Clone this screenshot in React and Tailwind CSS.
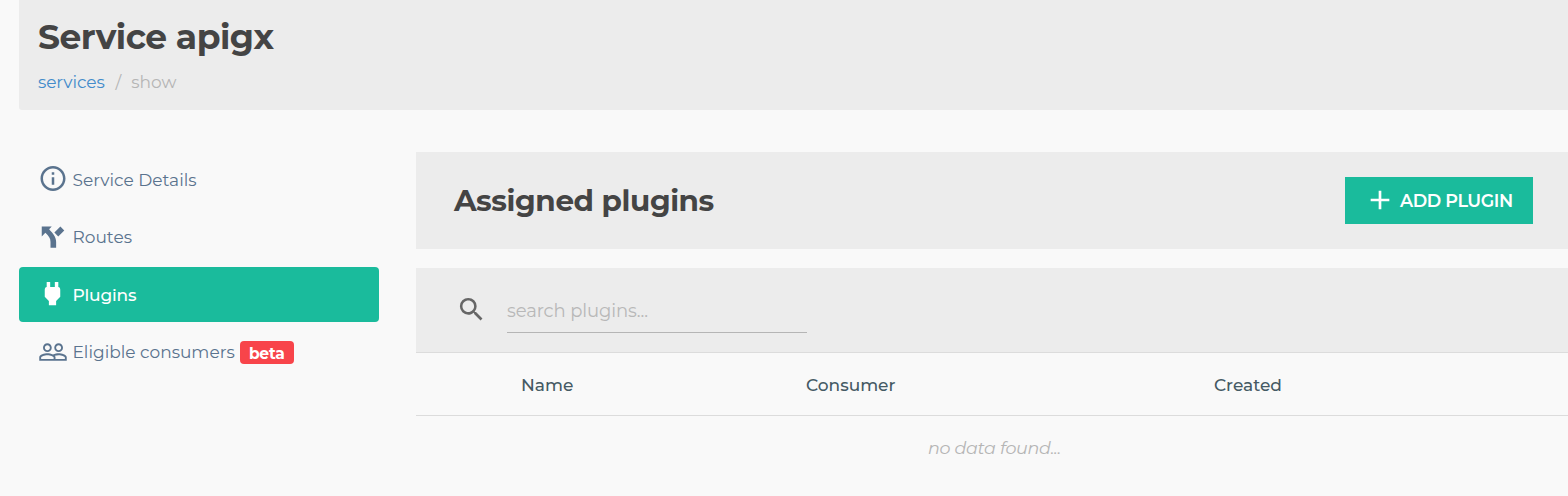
import { MdInfoOutline, MdPeopleOutline, MdSearch, MdAdd } from "react-icons/md";

function ForkIcon() {
  return (
    <svg viewBox="0 0 24 24" className="size-[30px]" fill="currentColor">
      <path d="M3 3.5V11.5L5.9 8.6C8.6 11.3 10 12.8 10 16V20.5H14.5V16C14.5 11.5 11.6 8.9 8.9 5.8L11 3.5ZM17.9 3.6L13.1 8.4L16.2 11.5L21 6.7Z" />
    </svg>
  );
}

function PlugIcon() {
  return (
    <svg viewBox="0 0 24 24" className="mb-[2px] size-[31px]" fill="currentColor">
      <path d="M16.5 7V3H13.8V7H10.2V3H7.5V7C6.6 7 6 8 6 9V14.5L9.2 17.8V21H14.8V17.8L18 14.5V9C18 8 17.4 7 16.5 7Z" />
    </svg>
  );
}

function NavItem({ icon, label, active, badge }) {
  return (
    <a
      className={`flex h-[55px] items-center rounded-[4px] pl-[18px] ${
        active ? "bg-[#1abb9c] text-white" : "text-[#5a738e]"
      }`}
    >
      <span className="flex w-[31px] shrink-0 justify-center">{icon}</span>
      <span
        className={`ml-[4.5px] whitespace-nowrap text-[17px] leading-6 ${
          active ? "font-medium tracking-[-0.2px]" : ""
        }`}
      >
        {label}
      </span>
      {badge && (
        <span className="ml-[5px] flex h-[23px] w-[54px] shrink-0 items-center justify-center rounded-[4px] bg-[#f8444a] pt-[3px] text-[15.5px] font-bold tracking-[-0.2px] text-white">
          {badge}
        </span>
      )}
    </a>
  );
}

export default function App() {
  return (
    <div className="h-[496px] w-[1568px] overflow-hidden bg-[#f9f9f9] pl-[19px] font-['Montserrat','Inter',sans-serif]">
      <header className="h-[110px] rounded-bl-[3px] bg-[#ececec] pl-[19px] pt-[13px]">
        <h1 className="text-[34.5px] font-bold leading-[48px] tracking-[-0.5px] text-[#444]">Service apigx</h1>
        <nav className="mt-[9px] flex text-[17px] leading-6 text-[#b5b5b5]">
          <a className="tracking-[-0.1px] text-[#428bca]">services</a>
          <span className="ml-[11px]">/</span>
          <span className="ml-[10px]">show</span>
        </nav>
      </header>

      <div className="mt-[42px] flex">
        <aside className="flex w-[360px] shrink-0 flex-col gap-[2.5px]">
          <NavItem icon={<MdInfoOutline className="mb-[2px] ml-px size-[31px]" />} label="Service Details" />
          <NavItem icon={<ForkIcon />} label="Routes" />
          <NavItem icon={<PlugIcon />} label="Plugins" active />
          <NavItem icon={<MdPeopleOutline className="size-[30px]" />} label="Eligible consumers" badge="beta" />
        </aside>

        <main className="ml-[37px] flex-1">
          <section className="flex h-[97px] items-center justify-between bg-[#ececec] pl-[38px] pr-[35px]">
            <h2 className="-mt-[2px] text-[29.5px] font-bold leading-10 tracking-[-0.4px] text-[#444]">
              Assigned plugins
            </h2>
            <button className="flex h-[47px] w-[188px] items-center bg-[#1abb9c] pl-[19px] text-white">
              <MdAdd className="mb-[2px] size-[32px]" />
              <span className="ml-[4px] whitespace-nowrap pt-[2px] text-[17.5px] font-semibold tracking-[-0.4px]">
                ADD PLUGIN
              </span>
            </button>
          </section>

          <section className="mt-[19px]">
            <div className="flex h-[85px] border-b border-[#dcdcdc] bg-[#ececec] pl-[40px] pt-[26px]">
              <MdSearch className="size-[31px] text-[#666]" />
              <div className="ml-[20px] h-[39px] w-[300px] border-b border-[#b5b5b5] pt-[5px] text-[18px] leading-6 tracking-[-0.1px] text-[#b8b8b8]">
                search plugins...
              </div>
            </div>
            <div className="flex h-[63px] items-center border-b border-[#dcdcdc] pl-[105px] pt-[3px] text-[17px] font-medium text-[#455a64]">
              <span className="w-[285px]">Name</span>
              <span className="w-[408px]">Consumer</span>
              <span>Created</span>
            </div>
            <p className="pl-[512px] pt-[20px] text-[17.5px] italic leading-6 tracking-[-0.3px] text-[#b5b5b5]">
              no data found...
            </p>
          </section>
        </main>
      </div>
    </div>
  );
}
